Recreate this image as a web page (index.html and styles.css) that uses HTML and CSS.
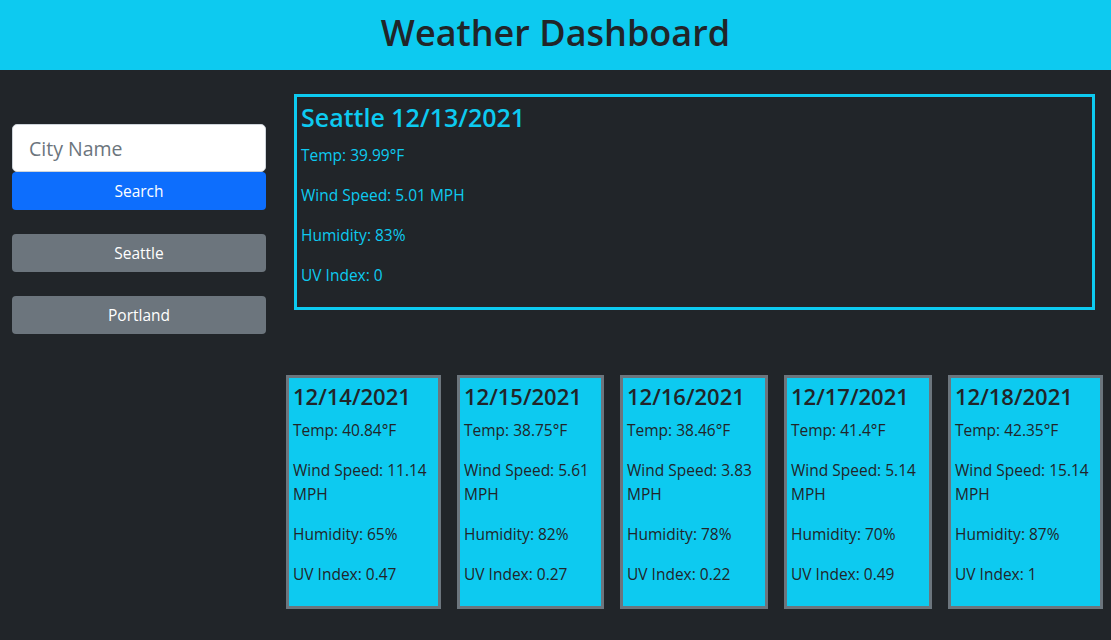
FILE: index.html
```html
<!DOCTYPE html>
<html lang="en">
<head>
<meta charset="utf-8">
<title>Weather Dashboard</title>
<link rel="stylesheet" href="styles.css">
</head>
<body>
<header class="banner">
  <h1 class="banner-title">Weather Dashboard</h1>
</header>
<div class="layout">
  <aside class="sidebar">
    <form class="search">
      <input class="search-input" type="text" placeholder="City Name">
      <button class="btn btn-primary" type="button">Search</button>
    </form>
    <div class="history">
      <button class="btn btn-secondary" type="button">Seattle</button>
      <button class="btn btn-secondary" type="button">Portland</button>
    </div>
  </aside>
  <main class="main">
    <section class="current">
      <h3 class="current-title">Seattle 12/13/2021</h3>
      <p>Temp: 39.99°F</p>
      <p>Wind Speed: 5.01 MPH</p>
      <p>Humidity: 83%</p>
      <p>UV Index: 0</p>
    </section>
    <section class="forecast">
      <div class="card">
        <h4 class="card-title">12/14/2021</h4>
        <p>Temp: 40.84°F</p>
        <p>Wind Speed: 11.14 MPH</p>
        <p>Humidity: 65%</p>
        <p>UV Index: 0.47</p>
      </div>
      <div class="card">
        <h4 class="card-title">12/15/2021</h4>
        <p>Temp: 38.75°F</p>
        <p>Wind Speed: 5.61 MPH</p>
        <p>Humidity: 82%</p>
        <p>UV Index: 0.27</p>
      </div>
      <div class="card">
        <h4 class="card-title">12/16/2021</h4>
        <p>Temp: 38.46°F</p>
        <p>Wind Speed: 3.83 MPH</p>
        <p>Humidity: 78%</p>
        <p>UV Index: 0.22</p>
      </div>
      <div class="card">
        <h4 class="card-title">12/17/2021</h4>
        <p>Temp: 41.4°F</p>
        <p>Wind Speed: 5.14 MPH</p>
        <p>Humidity: 70%</p>
        <p>UV Index: 0.49</p>
      </div>
      <div class="card">
        <h4 class="card-title">12/18/2021</h4>
        <p>Temp: 42.35°F</p>
        <p>Wind Speed: 15.14 MPH</p>
        <p>Humidity: 87%</p>
        <p>UV Index: 1</p>
      </div>
    </section>
  </main>
</div>
</body>
</html>
```

FILE: styles.css
```css
* { box-sizing: border-box; }

html, body {
  margin: 0;
  padding: 0;
}

body {
  background: #212529;
  color: #212529;
  font-family: "Open Sans", "Noto Sans", "DejaVu Sans", sans-serif;
  font-size: 15.5px;
  line-height: 24px;
  height: 640px;
  overflow: hidden;
}

p {
  margin: 0 0 16px 0;
}

.banner {
  background: #0dcaf0;
  height: 70px;
  padding-top: 9px;
  text-align: center;
}

.banner-title {
  margin: 0;
  font-size: 36px;
  font-weight: 600;
  line-height: 48px;
  color: #212529;
}

.layout {
  display: grid;
  grid-template-columns: 278px 1fr;
}

.sidebar {
  padding: 54px 12px 0 12px;
}

.search {
  display: flex;
  flex-direction: column;
  margin: 0;
}

.search-input {
  height: 48px;
  width: 100%;
  border: 1px solid #ced4da;
  border-radius: 5px;
  padding: 0 16px;
  font-family: inherit;
  font-size: 19.5px;
  color: #212529;
  background: #fff;
  outline: none;
}

.search-input::placeholder {
  color: #6c757d;
}

.btn {
  display: block;
  width: 100%;
  height: 38px;
  border: none;
  border-radius: 4px;
  font-family: inherit;
  font-size: 15.5px;
  line-height: 24px;
  color: #fff;
  padding: 0;
  cursor: pointer;
}

.btn-primary {
  background: #0d6efd;
}

.btn-secondary {
  background: #6c757d;
}

.history {
  display: flex;
  flex-direction: column;
  gap: 24px;
  margin-top: 24px;
}

.main {
  padding-top: 24px;
}

.current {
  margin: 0 16px;
  border: 3px solid #0dcaf0;
  padding: 4px;
  color: #0dcaf0;
}

.current-title {
  margin: 0 0 8px 0;
  font-size: 25px;
  font-weight: 600;
  line-height: 33.6px;
}

.forecast {
  display: grid;
  grid-template-columns: 155px 147px 148px 148px 155px;
  gap: 16px;
  margin: 65px 8px 0 8px;
}

.card {
  background: #0dcaf0;
  border: 3px solid #6c757d;
  padding: 4px;
  color: #212529;
}

.card-title {
  margin: 0 0 8px 0;
  font-size: 22px;
  font-weight: 600;
  line-height: 28.8px;
}
```
